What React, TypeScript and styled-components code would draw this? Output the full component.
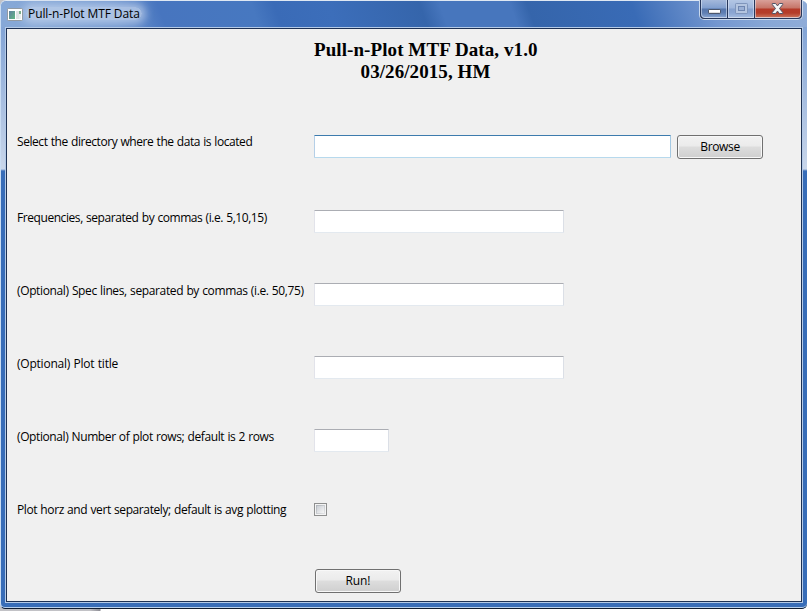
import React from "react";
import styled, { createGlobalStyle, css } from "styled-components";

const GlobalStyle = createGlobalStyle`
  * { box-sizing: border-box; }
  html, body { margin: 0; padding: 0; background: #fff; overflow: hidden; }
`;

const Desktop = styled.div`
  width: 807px;
  height: 611px;
  background: linear-gradient(90deg, #c2c2c6 0, #c2c2c6 90px, #8d8d95 100px, #ffffff 101px);
  font-family: "Open Sans", "Noto Sans", sans-serif;
  font-size: 12px;
  color: #000;
`;

const Frame = styled.div`
  width: 807px;
  height: 609px;
  display: flex;
  flex-direction: column;
  border-top: 1px solid #dfe8f3;
  border-left: 1px solid #c9dcf2;
  border-bottom: 1px solid #101c30;
  border-radius: 6px 6px 5px 5px;
  box-shadow: inset 0 -1px 0 #b8d0ed;
  background:
    linear-gradient(180deg, #84a5d6 0, #84a5d6 30px, #c9d6ea 168px, transparent 170px) 0 0 / 5px 170px no-repeat,
    linear-gradient(180deg, #84a5d6 0, #84a5d6 30px, #c9d6ea 168px, transparent 170px) 100% 0 / 5px 170px no-repeat,
    #386db8;
`;

const TitleBar = styled.header`
  height: 26px;
  flex: none;
  display: flex;
  align-items: flex-start;
  padding-left: 6px;
  padding-right: 4px;
  border-radius: 6px 6px 0 0;
  background: linear-gradient(70deg, #86a8d7 0, #86a8d7 20px, #6f96d0 110px, #4775bf 155px, #4778c0 243px, #3a6bb7 264px, #3c6eba 315px, #3565ab 401px, #4776bd 420px, #4776bd 486px, #3565ab 502px, #396bb6 600px, #7497d0 675px, #87a7d6 720px, #8facd8 760px);
`;

const AppIcon = styled.svg`
  display: block;
  flex: none;
  position: relative;
  margin-top: 7px;
`;

const WindowTitle = styled.span`
  margin: 6px 0 0 3px;
  padding: 0 2px;
  line-height: 13px;
  letter-spacing: -0.09px;
  white-space: nowrap;
  border-radius: 7px;
  background: rgba(196, 212, 236, 0.7);
  box-shadow: 0 0 8px 4px rgba(196, 212, 236, 0.7);
`;

const WindowControls = styled.div`
  margin-left: auto;
  margin-top: -1px;
  width: 104px;
  height: 20px;
  display: flex;
  border: 1px solid #c9d9ed;
  border-top: 0;
  border-radius: 0 0 5px 5px;
  background: #26375b;
  padding: 0 1px 1px;
  gap: 1px;
`;

const ControlButton = styled.button<{ $kind: "min" | "max" | "close" }>`
  display: flex;
  align-items: center;
  justify-content: center;
  padding: 0;
  border: 1px solid rgba(225, 233, 246, 0.55);
  border-top-width: 0;
  height: 18px;
  width: ${({ $kind }) => ($kind === "close" ? 47 : $kind === "min" ? 27 : 26)}px;
  border-radius: ${({ $kind }) => ($kind === "min" ? "0 0 0 4px" : $kind === "close" ? "0 0 4px 0" : "0")};
  background: ${({ $kind }) =>
    $kind === "close"
      ? "linear-gradient(#d9a099 0, #c67568 8px, #b53a29 9px, #b43d2a 13px, #cc7961 18px)"
      : $kind === "min"
        ? "linear-gradient(#a4b8da 0, #819fce 8px, #5575ab 9px, #6080b3 13px, #8ba8d4 18px)"
        : "linear-gradient(#b3c6e4 0, #9fb6dc 8px, #86a1ce 9px, #8ba6d3 13px, #a6bde0 18px)"};
`;

const Client = styled.main`
  width: 798px;
  height: 576px;
  flex: none;
  margin-left: 4px;
  padding: 9px 10px 10px 11px;
  border: 1px solid #b4cae7;
  outline: 1px solid #1d3154;
  outline-offset: -2px;
  background: #f0f0f0;
`;

const Heading = styled.h1`
  margin: 2px 0 0 297px;
  width: 223px;
  height: 96px;
  font: bold 19px/22px "Liberation Serif", "Times New Roman", serif;
  letter-spacing: 0.08px;
  text-align: center;
  white-space: nowrap;
`;

const Form = styled.form`
  display: grid;
  grid-template-columns: 297px auto;
  grid-template-rows: 75px 73px 73px 73px 74px 66px 24px;
  justify-content: start;
  align-items: start;
`;

const Label = styled.label<{ $track: number; $drop?: number }>`
  line-height: 17px;
  margin-top: ${({ $drop = 0 }) => $drop - 2}px;
  letter-spacing: ${({ $track }) => $track}px;
  word-spacing: 0.5px;
  white-space: nowrap;
`;

const Controls = styled.div`
  display: flex;
  align-items: flex-start;
  gap: 6px;
`;

const TextInput = styled.input<{ $width: number; $active?: boolean }>`
  width: ${({ $width }) => $width}px;
  height: 23px;
  margin: 0;
  padding: 2px 4px;
  font: inherit;
  outline: none;
  background: #fff;
  border: 1px solid;
  border-radius: 1px;
  ${({ $active }) =>
    $active
      ? css`border-color: #3d7bad #a4c9e3 #b7d9ed #b5cfe7;`
      : css`border-color: #abadb3 #dbdfe6 #e3e9ef #e2e3ea;`}
`;

const PushButton = styled.button`
  width: 86px;
  height: 24px;
  margin: 0;
  padding: 0 0 1px;
  font: inherit;
  line-height: 17px;
  letter-spacing: -0.35px;
  color: #000;
  border: 1px solid #707070;
  border-radius: 3px;
  background: linear-gradient(#f2f2f2 0, #ebebeb 10px, #dddddd 11px, #cfcfcf 22px);
  box-shadow: inset 0 0 0 1px #f8f8f8;
`;

const RunButton = styled(PushButton)`
  grid-column: 2;
  margin-left: 1px;
  letter-spacing: -0.1px;
`;

const CheckBox = styled.input.attrs({ type: "checkbox" })`
  appearance: none;
  width: 13px;
  height: 13px;
  margin: 0;
  padding: 1px;
  border: 1px solid #8e8f8f;
  background:
    linear-gradient(135deg, #cbcfd5, #f6f6f6) 2px 2px / 7px 7px no-repeat,
    linear-gradient(135deg, #aeb3b9, #e5e6e8) 1px 1px / 9px 9px no-repeat,
    #f4f4f4;
`;

const MinimizeGlyph = () => (
  <svg width="13" height="18" viewBox="0 0 13 18">
    <rect x="0.5" y="9.5" width="12" height="4" rx="0.6" fill="#fff" stroke="#4b566c" />
    <path d="M1 12.5H12" stroke="#dedede" />
  </svg>
);

const MaximizeGlyph = () => (
  <svg width="13" height="18" viewBox="0 0 13 18">
    <rect x="2" y="5" width="9" height="7" fill="none" stroke="#b4c5e0" strokeWidth="2" />
    <rect x="0.5" y="3.5" width="12" height="10" rx="0.8" fill="none" stroke="#7f95bb" />
    <rect x="3.5" y="6.5" width="6" height="4" fill="#9ab0d5" stroke="#6f86b0" />
  </svg>
);

const CloseGlyph = () => (
  <svg width="13" height="18" viewBox="0 0 13 18">
    <path
      d="M1.3 3.5H4.6L6.5 5.9L8.4 3.5H11.7V4.6L8.5 8.5L11.7 12.4V13.5H8.4L6.5 11.1L4.6 13.5H1.3V12.4L4.5 8.5L1.3 4.6Z"
      fill="#f5f5f5"
      stroke="#525568"
      strokeLinejoin="round"
    />
  </svg>
);

export default function App() {
  return (
    <>
      <GlobalStyle />
      <Desktop>
        <Frame>
          <TitleBar>
            <AppIcon width="16" height="13" viewBox="0 0 16 13">
              <defs>
                <linearGradient id="pane" x1="0" y1="0" x2="1" y2="1">
                  <stop offset="0" stopColor="#6080a0" />
                  <stop offset="1" stopColor="#62b783" />
                </linearGradient>
              </defs>
              <rect x="0.5" y="0.5" width="15" height="12" rx="0.7" fill="#fff" stroke="#929aa2" />
              <rect x="2" y="3" width="6" height="8" fill="url(#pane)" />
              <rect x="9" y="3" width="3" height="8" fill="#e0e3e4" />
              <rect x="12" y="3" width="2" height="3" fill="#7bb08d" />
              <rect x="12" y="6" width="2" height="5" fill="#e9edef" />
            </AppIcon>
            <WindowTitle>Pull-n-Plot MTF Data</WindowTitle>
            <WindowControls>
              <ControlButton $kind="min" aria-label="Minimize"><MinimizeGlyph /></ControlButton>
              <ControlButton $kind="max" aria-label="Maximize"><MaximizeGlyph /></ControlButton>
              <ControlButton $kind="close" aria-label="Close"><CloseGlyph /></ControlButton>
            </WindowControls>
          </TitleBar>
          <Client>
            <Heading>
              Pull-n-Plot MTF Data, v1.0
              <br />
              03/26/2015, HM
            </Heading>
            <Form onSubmit={(event) => event.preventDefault()}>
              <Label htmlFor="directory" $track={-0.43}>Select the directory where the data is located</Label>
              <Controls>
                <TextInput id="directory" $width={357} $active />
                <PushButton type="button">Browse</PushButton>
              </Controls>
              <Label htmlFor="frequencies" $track={-0.43} $drop={1}>Frequencies, separated by commas (i.e. 5,10,15)</Label>
              <TextInput id="frequencies" $width={250} />
              <Label htmlFor="spec" $track={-0.37} $drop={1}>(Optional) Spec lines, separated by commas (i.e. 50,75)</Label>
              <TextInput id="spec" $width={250} />
              <Label htmlFor="title" $track={-0.22} $drop={1}>(Optional) Plot title</Label>
              <TextInput id="title" $width={250} />
              <Label htmlFor="rows" $track={-0.4} $drop={1}>(Optional) Number of plot rows; default is 2 rows</Label>
              <TextInput id="rows" $width={75} />
              <Label htmlFor="separate" $track={-0.4}>Plot horz and vert separately; default is avg plotting</Label>
              <CheckBox id="separate" />
              <RunButton type="submit">Run!</RunButton>
            </Form>
          </Client>
        </Frame>
      </Desktop>
    </>
  );
}
